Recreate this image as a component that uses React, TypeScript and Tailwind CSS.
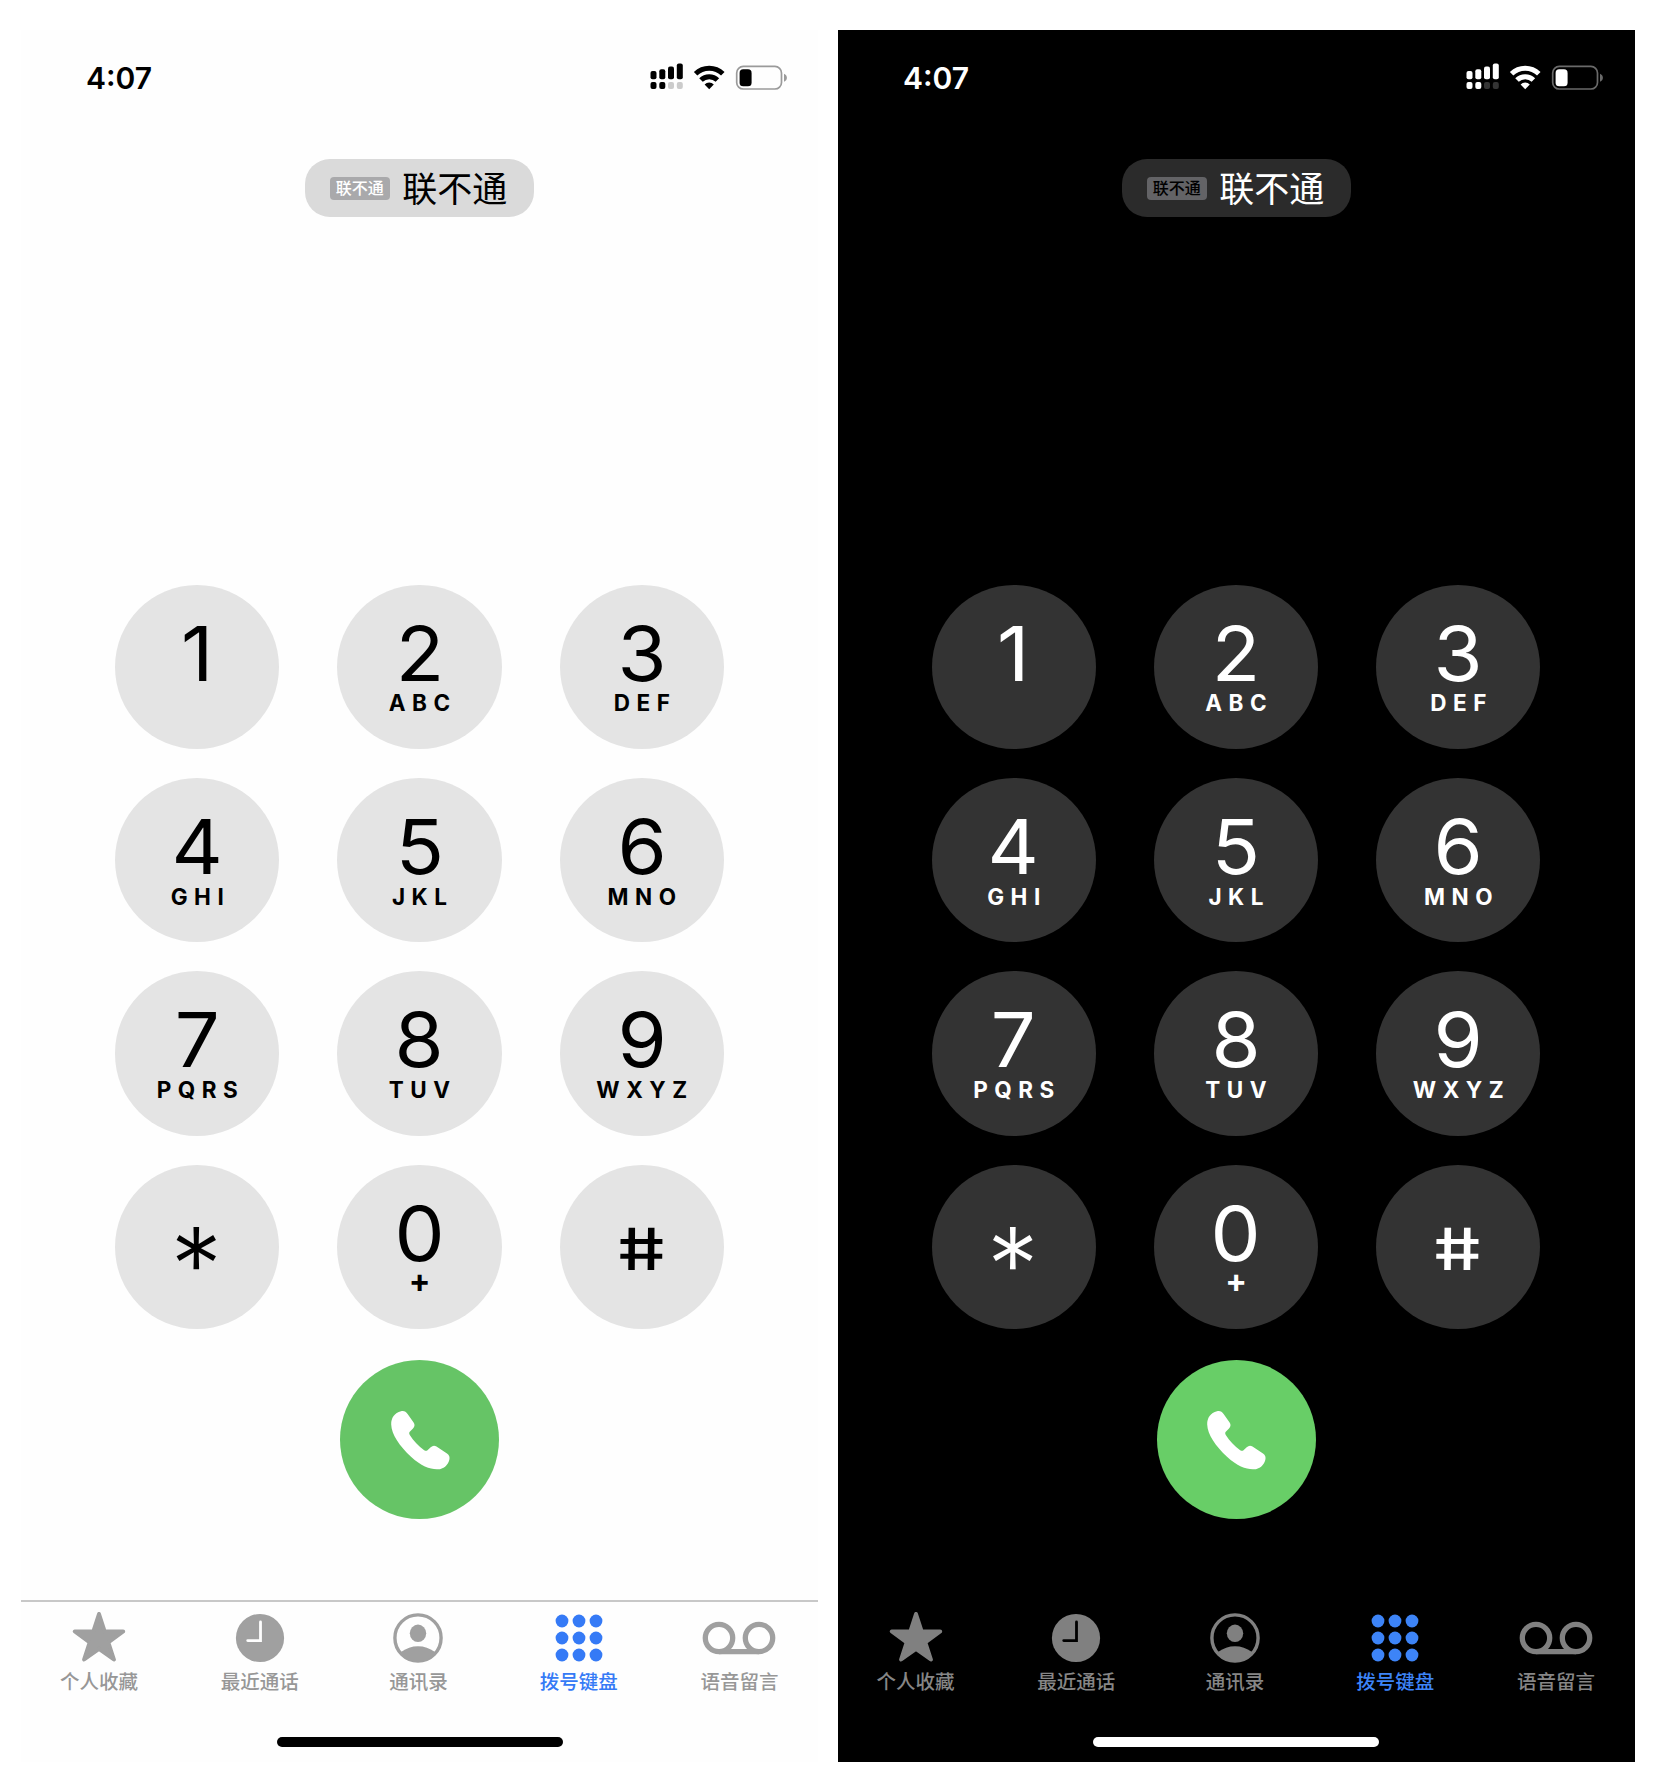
type Theme = {
  panel: string;
  fg: string;
  pill: string;
  badge: string;
  key: string;
  call: string;
  line: string;
  icon: string;
  label: string;
  active: string;
  activeLabel: string;
  faint: string;
  battery: string;
  home: string;
};

const light: Theme = {
  panel: "bg-[#fefefe] text-black",
  fg: "#000000",
  pill: "bg-[#dadada]",
  badge: "bg-[#a9a9ab] text-white",
  key: "bg-[#e4e4e4]",
  call: "bg-[#66c466]",
  line: "border-[#c8c8c8]",
  icon: "text-[#a0a0a0]",
  label: "text-[#979797]",
  active: "text-[#357af6]",
  activeLabel: "text-[#357af6]",
  faint: "#cbcbcb",
  battery: "#9a9a9a",
  home: "bg-black",
};

const dark: Theme = {
  panel: "bg-black pr-px text-white",
  fg: "#ffffff",
  pill: "ml-px bg-[#2b2b2b]",
  badge: "bg-[#636366] text-black",
  key: "bg-[#333333]",
  call: "bg-[#68ce67]",
  line: "border-black",
  icon: "text-[#808080]",
  label: "text-[#868686]",
  active: "text-[#3d84f7]",
  activeLabel: "text-[#3d84f7]",
  faint: "#343434",
  battery: "#6a6a6a",
  home: "bg-white",
};

const keys = [
  ["1", ""],
  ["2", "ABC"],
  ["3", "DEF"],
  ["4", "GHI"],
  ["5", "JKL"],
  ["6", "MNO"],
  ["7", "PQRS"],
  ["8", "TUV"],
  ["9", "WXYZ"],
  ["*", ""],
  ["0", "+"],
  ["#", ""],
];

function StatusIcons({ t }: { t: Theme }) {
  return (
    <svg width="140" height="28" viewBox="650 63 140 28" fill={t.fg}>
      <rect x="650.5" y="71" width="6" height="8.3" rx="2" />
      <rect x="659.3" y="69.3" width="6" height="10" rx="2" />
      <rect x="668" y="66.5" width="6" height="12.8" rx="2" />
      <rect x="676.8" y="63.5" width="6" height="15.8" rx="2" />
      <rect x="650.5" y="82" width="6" height="7" rx="2" />
      <rect x="659.3" y="82" width="6" height="7" rx="2" />
      <rect x="668" y="82" width="6" height="7" rx="2" fill={t.faint} />
      <rect x="676.8" y="82" width="6" height="7" rx="2" fill={t.faint} />
      <path d="M695.6 73.8A19.5 19.5 0 0 1 722.8 73.8" fill="none" stroke={t.fg} strokeWidth="5" />
      <path d="M701 80.1A11.6 11.6 0 0 1 717.4 80.1" fill="none" stroke={t.fg} strokeWidth="5" />
      <path d="M704.6 84.4A6.6 6.6 0 0 1 713.8 84.4L709.2 89.2Z" />
      <rect x="736.7" y="66.4" width="44.8" height="22.6" rx="6.6" fill="none" stroke={t.battery} strokeWidth="1.7" />
      <rect x="739.6" y="69.3" width="12" height="17" rx="3.6" />
      <path d="M784 73.8c1.8.7 2.9 2.2 2.9 4s-1.100 3.300-2.900 4z" fill={t.battery} />
    </svg>
  );
}

function Star() {
  return (
    <svg width="54" height="52" viewBox="0 0 54 52" fill="currentColor" stroke="currentColor" strokeWidth="4" strokeLinejoin="round">
      <path d="M27 2L32.700 19.500H51.200L36.300 30.300L41.900 47.500L27 36.800L12.100 47.500L17.700 30.300L2.800 19.500H21.300Z" />
    </svg>
  );
}

function Clock({ bg }: { bg: string }) {
  return (
    <svg width="50" height="50" viewBox="0 0 50 50">
      <circle cx="25" cy="25" r="24.100" fill="currentColor" />
      <path d="M25.500 9V27.600H12.700" fill="none" stroke={bg} strokeWidth="2.800" strokeLinecap="round" />
    </svg>
  );
}

function Contact({ id }: { id: string }) {
  return (
    <svg width="50" height="50" viewBox="0 0 50 50" fill="currentColor">
      <clipPath id={id}>
        <circle cx="25" cy="25" r="23.500" />
      </clipPath>
      <circle cx="25" cy="25" r="23.100" fill="none" stroke="currentColor" strokeWidth="3.400" />
      <ellipse cx="25" cy="20.300" rx="8.200" ry="8.700" />
      <ellipse cx="25" cy="51" rx="23" ry="17.700" clipPath={`url(#${id})`} />
    </svg>
  );
}

function Dots() {
  return (
    <svg width="48" height="48" viewBox="0 0 48 48" fill="currentColor">
      {[7, 24, 41].map((y) => [7, 24, 41].map((x) => <circle key={`${x}-${y}`} cx={x} cy={y} r="6.400" />))}
    </svg>
  );
}

function Voicemail() {
  return (
    <svg width="74" height="34" viewBox="0 0 74 34" fill="none" stroke="currentColor" strokeWidth="5.300">
      <circle cx="17" cy="17" r="13.700" />
      <circle cx="57" cy="17" r="13.700" />
      <path d="M17 30.700H57" />
    </svg>
  );
}

function Key({ digit, letters, color }: { digit: string; letters: string; color: string }) {
  return (
    <div className={`flex h-[164.3px] w-[164.3px] flex-col items-center rounded-full ${color}`}>
      {digit === "*" && <span className="mt-[41.500px] mr-[2px] text-[103px] leading-[118px] font-light">*</span>}
      {digit === "#" && <span className="mt-[50.500px] mr-[1px] scale-x-[1.31] -skew-x-[-9deg] text-[58px] leading-[68px] font-medium">#</span>}
      {digit !== "*" && digit !== "#" && (
        <span className="mt-[35px] scale-x-[1.06] text-[75px] leading-[68px]">{digit}</span>
      )}
      {letters === "+" && <span className="mt-[-1px] text-[32px] leading-[27px] font-bold">+</span>}
      {letters !== "" && letters !== "+" && (
        <span className="mt-[1.700px] mr-[-6.500px] text-[22.500px] leading-[27px] font-bold tracking-[6.500px]">{letters}</span>
      )}
    </div>
  );
}

function Phone({ t, name }: { t: Theme; name: string }) {
  const tabs = [
    { label: "个人收藏", icon: <Star /> },
    { label: "最近通话", icon: <Clock bg={name === "dark" ? "#000000" : "#fefefe"} />, nudge: "ml-[1px]" },
    { label: "通讯录", icon: <Contact id={`contact-${name}`} />, nudge: "mr-[2px]" },
    { label: "拨号键盘", icon: <Dots />, active: true, nudge: "mr-[2px]" },
    { label: "语音留言", icon: <Voicemail />, nudge: "mr-[1px]" },
  ];
  return (
    <div className={`flex h-[1732px] w-[797px] shrink-0 flex-col items-center ${t.panel}`}>
      <div className="flex h-[129.300px] w-full items-start justify-between pt-[33px] pr-[28px] pl-[65px]">
        <span className="mt-[-3px] text-[30px] leading-[36px] font-semibold">4:07</span>
        <StatusIcons t={t} />
      </div>

      <div className={`flex h-[57.400px] w-[229.400px] items-center rounded-[25px] pl-[25px] ${t.pill}`}>
        <span className={`mt-[1px] flex h-[23px] w-[60px] items-center justify-center rounded-[4px] text-[16px] leading-none font-medium ${t.badge}`}>
          联不通
        </span>
        <span className="mt-[3px] ml-[12.500px] text-[35px] leading-none">联不通</span>
      </div>

      <div className="mt-[368px] grid grid-cols-3 gap-x-[58px] gap-y-[29px]">
        {keys.map(([digit, letters]) => (
          <Key key={digit} digit={digit} letters={letters} color={t.key} />
        ))}
      </div>

      <div className={`mt-[31px] flex h-[159px] w-[159px] items-center justify-center rounded-full ${t.call}`}>
        <svg className="mt-[1px]" width="60" height="60" viewBox="0 0 60 60" fill="#fff">
          <path d="M11 1.300C14 .500 16 1.800 17.600 4L23.600 12.600C25 14.700 24.800 16.500 23 18.500L20 21.600C19 22.600 19 23.700 19.800 24.900C23.300 30.600 28.700 36.200 34.200 40.200C35.400 41 36.500 41.100 37.500 40.200L40.700 37.300C42.600 35.600 44.400 35.300 46.500 36.600L57 43.500C59.300 45 60 47.200 59.300 49.900C57.800 55.500 53.400 59 48 59.300C40.500 59.700 31.500 56.500 21 46.800C9.500 36 1.500 24.500 1.200 14.500C1 8 4.500 3 11 1.300Z" />
        </svg>
      </div>

      <div className={`mt-[81px] flex w-full justify-center border-t-2 ${t.line}`}>
        <div className="grid w-[801px] shrink-0 grid-cols-5">
          {tabs.map((tab) => (
            <div key={tab.label} className={`flex flex-col items-center ${tab.nudge ?? ""} ${tab.active ? t.active : t.icon}`}>
              <div className="flex h-[73px] items-center justify-center">{tab.icon}</div>
              <span className={`mt-[-3.500px] text-[19.500px] leading-[22px] font-medium ${tab.active ? t.activeLabel : t.label}`}>
                {tab.label}
              </span>
            </div>
          ))}
        </div>
      </div>

      <div className={`mt-auto mb-[15.300px] h-[10px] w-[286px] rounded-full ${t.home}`} />
    </div>
  );
}

export default function App() {
  return (
    <main className="flex h-[1792px] w-[1656px] gap-5 bg-white pt-[30px] pl-[21px] font-['Inter','Noto_Sans_CJK_SC',sans-serif]">
      <Phone t={light} name="light" />
      <Phone t={dark} name="dark" />
    </main>
  );
}
